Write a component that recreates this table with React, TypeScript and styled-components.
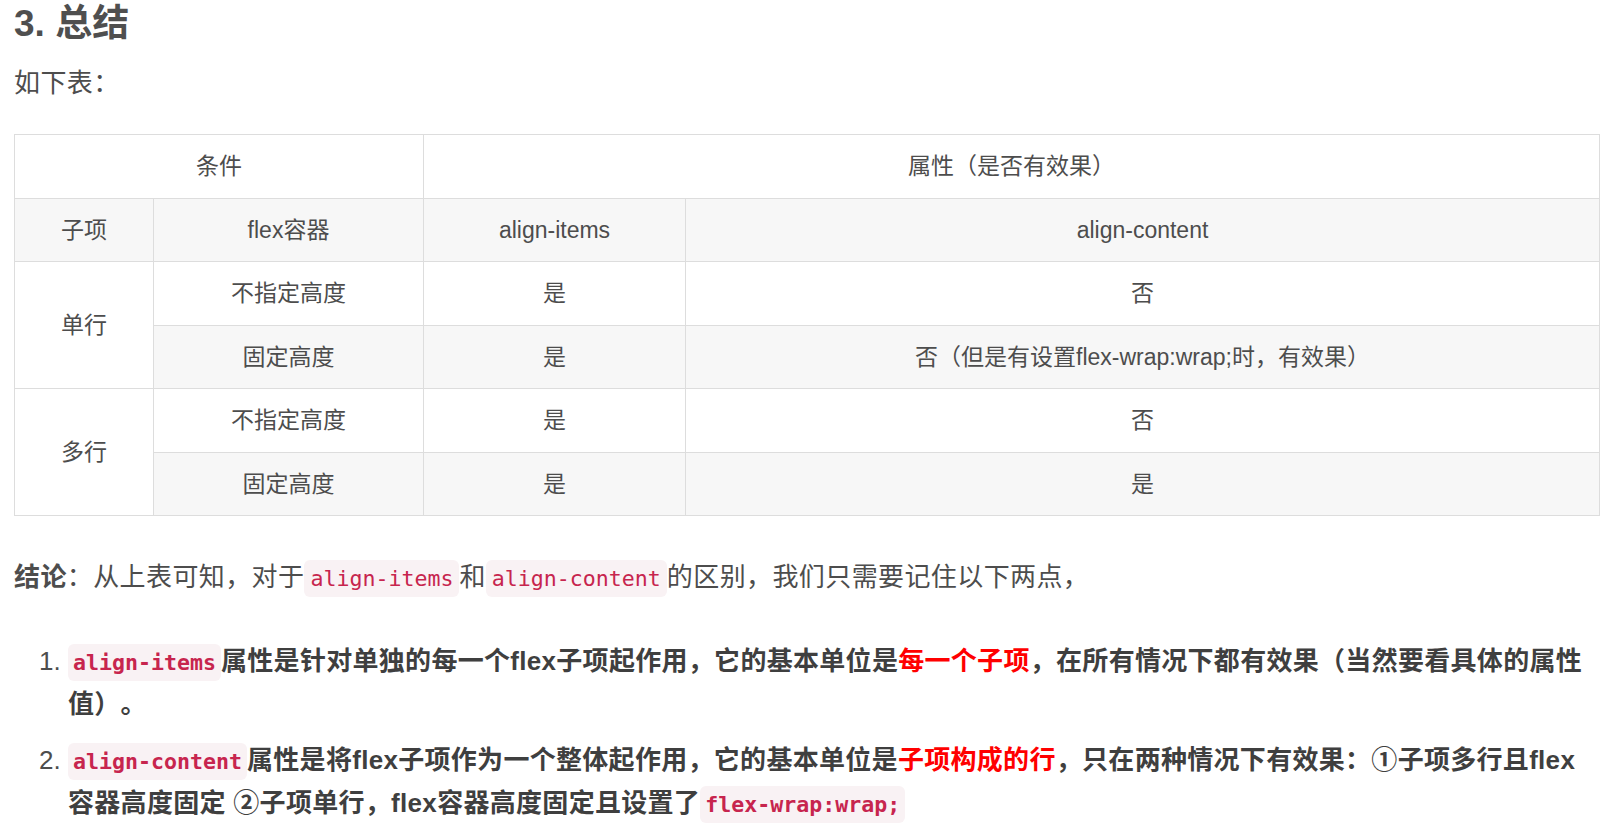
import React from "react";
import styled, { createGlobalStyle } from "styled-components";

const GlobalStyle = createGlobalStyle`
  html, body { margin: 0; padding: 0; background: #ffffff; }
  body {
    font-family: "Liberation Sans", "Noto Sans CJK SC", sans-serif;
    text-spacing-trim: space-all;
  }
`;

const Article = styled.article`
  padding: 0 13px 0 14px;
  color: #4d4d4d;
  font-family: "Liberation Sans", "Noto Sans CJK SC", sans-serif;
`;

const Heading = styled.h3`
  margin: 0 0 14px;
  font-size: 37px;
  line-height: 48px;
  font-weight: 700;
  color: #4f4f4f;
`;

const Para = styled.p<{ $gap: number }>`
  margin: 0 0 ${(p) => p.$gap}px;
  font-size: 26px;
  line-height: 42px;
  letter-spacing: 0.4px;
`;

const Table = styled.table`
  width: 100%;
  border-collapse: collapse;
  table-layout: fixed;
  margin: 0 0 40px;
  font-size: 23px;
  color: #4d4d4d;
`;

const Row = styled.tr`
  &:nth-child(even) { background: #f7f7f7; }
`;

const Cell = styled.td`
  border: 1px solid #dddddd;
  padding: 13px;
  line-height: 36.5px;
  text-align: center;
  font-weight: 400;
`;

const Code = styled.code<{ $bold?: boolean }>`
  font-family: "DejaVu Sans Mono", "Liberation Mono", monospace;
  font-size: 21.6px;
  line-height: 1;
  font-weight: ${(p) => (p.$bold ? 700 : 400)};
  letter-spacing: 0;
  color: #c7254e;
  background: #f9f2f4;
  border-radius: 6px;
  padding: 6px ${(p) => (p.$bold ? 5 : 6)}px;
`;

const List = styled.ol`
  margin: 0;
  padding-left: 54px;
  font-size: 26px;
  line-height: 43px;
`;

const Item = styled.li`
  margin-bottom: 12.5px;
  &::marker { color: #4d4d4d; font-weight: 400; }
`;

const Strong = styled.strong<{ $dark?: boolean }>`
  font-weight: 700;
  color: ${(p) => (p.$dark ? "#3f3f3f" : "#4d4d4d")};
  letter-spacing: ${(p) => (p.$dark ? 0.3 : 0.4)}px;
`;

const Red = styled.span`
  color: #ff0000;
`;

export default function App() {
  return (
    <>
      <GlobalStyle />
      <Article>
        <Heading>3. 总结</Heading>
        <Para $gap={30}>如下表：</Para>
        <Table>
          <colgroup>
            <col style={{ width: 139 }} />
            <col style={{ width: 270 }} />
            <col style={{ width: 262 }} />
            <col />
          </colgroup>
          <tbody>
            <Row>
              <Cell colSpan={2}>条件</Cell>
              <Cell colSpan={2}>属性（是否有效果）</Cell>
            </Row>
            <Row>
              <Cell>子项</Cell>
              <Cell>flex容器</Cell>
              <Cell>align-items</Cell>
              <Cell>align-content</Cell>
            </Row>
            <Row>
              <Cell rowSpan={2}>单行</Cell>
              <Cell>不指定高度</Cell>
              <Cell>是</Cell>
              <Cell>否</Cell>
            </Row>
            <Row>
              <Cell>固定高度</Cell>
              <Cell>是</Cell>
              <Cell>否（但是有设置flex-wrap:wrap;时，有效果）</Cell>
            </Row>
            <Row>
              <Cell rowSpan={2}>多行</Cell>
              <Cell>不指定高度</Cell>
              <Cell>是</Cell>
              <Cell>否</Cell>
            </Row>
            <Row>
              <Cell>固定高度</Cell>
              <Cell>是</Cell>
              <Cell>是</Cell>
            </Row>
          </tbody>
        </Table>
        <Para $gap={42}>
          <Strong>结论</Strong>：从上表可知，对于<Code>align-items</Code>和<Code>align-content</Code>的区别，我们只需要记住以下两点，
        </Para>
        <List>
          <Item>
            <Strong $dark>
              <Code $bold>align-items</Code>属性是针对单独的每一个flex子项起作用，它的基本单位是<Red>每一个子项</Red>，在所有情况下都有效果（当然要看具体的属性值）。
            </Strong>
          </Item>
          <Item>
            <Strong $dark>
              <Code $bold>align-content</Code>属性是将flex子项作为一个整体起作用，它的基本单位是<Red>子项构成的行</Red>，只在两种情况下有效果：①子项多行且flex容器高度固定 ②子项单行，flex容器高度固定且设置了<Code $bold>flex-wrap:wrap;</Code>
            </Strong>
          </Item>
        </List>
      </Article>
    </>
  );
}
